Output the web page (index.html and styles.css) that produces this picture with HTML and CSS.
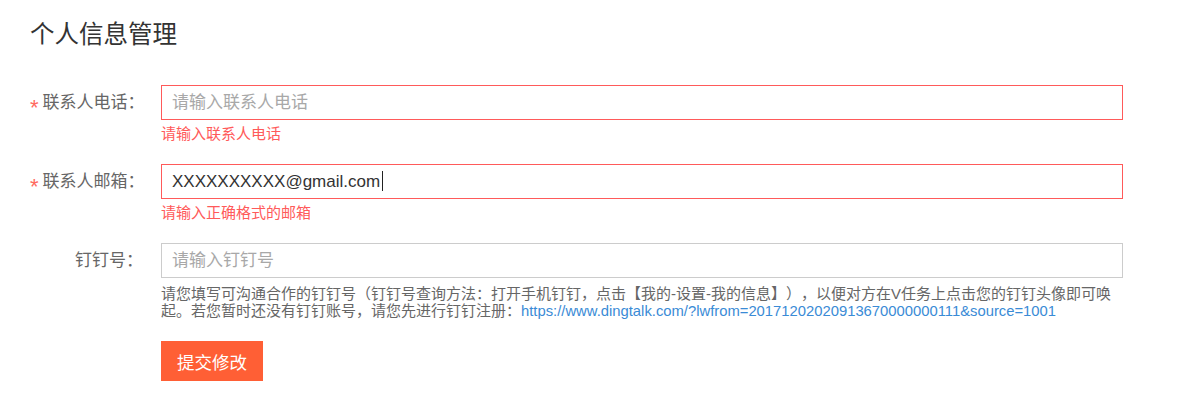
FILE: index.html
```html
<!doctype html>
<html lang="zh-CN">
<head>
    <meta charset="UTF-8">
    <meta name="viewport" content="width=device-width, initial-scale=1.0">
    <title>个人信息管理</title>
    <link rel="stylesheet" href="styles.css">
</head>
<body>
<div class="page">
    <h1 class="title">个人信息管理</h1>
    <form class="form">
        <div class="form-item">
            <label class="label"><span class="required">*</span>联系人电话：</label>
            <div class="field">
                <input class="input is-error" type="text" placeholder="请输入联系人电话">
                <div class="error">请输入联系人电话</div>
            </div>
        </div>
        <div class="form-item">
            <label class="label"><span class="required">*</span>联系人邮箱：</label>
            <div class="field">
                <div class="input is-error"><span class="value">XXXXXXXXXX@gmail.com</span><span class="caret"></span></div>
                <div class="error">请输入正确格式的邮箱</div>
            </div>
        </div>
        <div class="form-item">
            <label class="label">钉钉号：</label>
            <div class="field">
                <input class="input" type="text" placeholder="请输入钉钉号">
                <p class="help">请您填写可沟通合作的钉钉号（钉钉号查询方法：打开手机钉钉，点击【我的-设置-我的信息】），以便对方在V任务上点击您的钉钉头像即可唤起。若您暂时还没有钉钉账号，请您先进行钉钉注册：<a href="#">https://www.dingtalk.com/?lwfrom=20171202020913670000000111&amp;source=1001</a></p>
                <button class="btn" type="button">提交修改</button>
            </div>
        </div>
    </form>
</div>
</body>
</html>
```

FILE: styles.css
```css
*{margin: 0;padding: 0;box-sizing: border-box}
body{background: #fff;font-family: "Liberation Sans", "Noto Sans CJK SC", sans-serif;color: #333;text-spacing-trim: space-all}
.page{padding: 18px 30px 0}
.title{font-size: 24.5px;line-height: 34px;font-weight: normal;color: #333;margin-bottom: 33px}

.form-item{display: flex;margin-bottom: 20px}
.label{width: 131px;padding-right: 18px;text-align: right;font-size: 17px;line-height: 35px;color: #666;flex-shrink: 0;white-space: nowrap}
/* required mark sits a bit lower than the label text */
.required{color: #ff6a5f;margin-right: 4px;vertical-align: -7px;font-size: 22px;line-height: 1}
.field{width: 962px}

.input{display: block;width: 100%;height: 35px;border: 1px solid #ccc;padding: 0 10px;font-family: inherit;font-size: 17px;line-height: 33px;color: #333;outline: none;background: #fff}
.input::placeholder{color: #a8a8a8}
.input.is-error{border-color: #ff5a5a}
.value{vertical-align: top}
.caret{display: inline-block;width: 1px;height: 20px;background: #222;margin-left: 2px;vertical-align: top;margin-top: 6px}

.error{font-size: 15px;line-height: 20px;padding-top: 4px;color: #ff5a5a}

.help{margin-top: 7px;font-size: 15px;line-height: 17px;color: #666}
.help a{color: #3a8bd6;text-decoration: none;font-size: 14.8px}

.btn{display: block;margin-top: 21px;width: 102px;height: 40px;border: 0;background: #ff5f35;color: #fff;font-family: inherit;font-size: 17.5px;cursor: pointer}
```
